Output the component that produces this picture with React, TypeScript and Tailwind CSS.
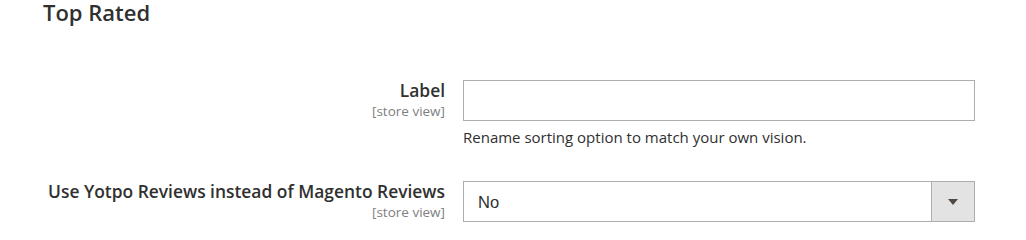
import React from "react";

export default function App() {
  return (
    <div className="w-[1026px] h-[234px] bg-white text-[#303030] overflow-hidden" style={{ fontFamily: '"Open Sans", sans-serif' }}>
      <div className="pl-[43px] pt-[2px] h-[80px]">
        <div className="text-[22px] font-semibold leading-[20px] text-[#303030]">Top Rated</div>
      </div>
      <div className="flex">
        <div className="w-[445px] text-right -mt-[1px]">
          <div className="text-[17.4px] font-semibold leading-[22px]">Label</div>
          <div className="mt-[2px] text-[13.5px] leading-[16px] text-[#808080]">[store view]</div>
        </div>
        <div className="ml-[18px] w-[512px]">
          <div className="h-[41px] border border-[#adadad] bg-white"></div>
          <div className="mt-[6px] text-[15px] leading-[20px] text-[#303030]">Rename sorting option to match your own vision.</div>
        </div>
      </div>
      <div className="flex mt-[34px]">
        <div className="w-[445px] text-right -mt-[1px]">
          <div className="text-[17.4px] font-semibold leading-[22px]">Use Yotpo Reviews instead of Magento Reviews</div>
          <div className="mt-[2px] text-[13.5px] leading-[16px] text-[#808080]">[store view]</div>
        </div>
        <div className="ml-[18px] w-[512px] h-[41px] border border-[#adadad] flex bg-white">
          <div className="flex-1 flex items-center pl-[14px] pt-[1px] text-[16.5px]" style={{ fontFamily: '"Liberation Sans", Arial, sans-serif' }}>No</div>
          <div className="w-[43px] border-l border-[#adadad] bg-[#e3e3e3] flex items-center justify-center">
            <svg width="10" height="6" viewBox="0 0 10 6"><polygon points="0,0 10,0 5,6" fill="#514943" /></svg>
          </div>
        </div>
      </div>
    </div>
  );
}
